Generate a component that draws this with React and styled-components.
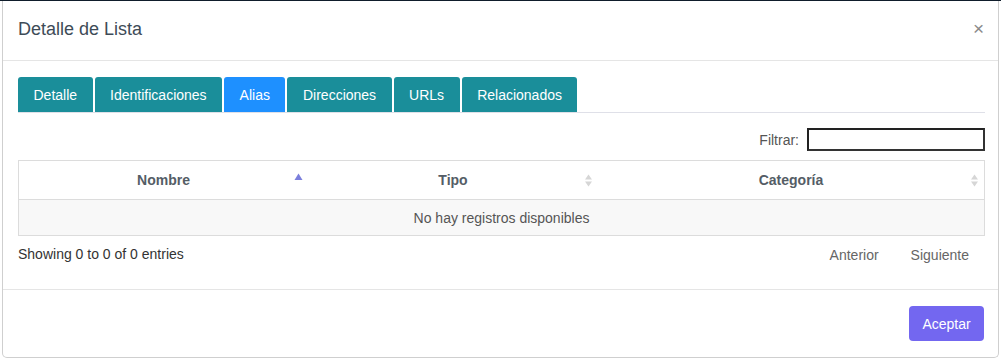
import React from 'react';
import styled, { createGlobalStyle } from 'styled-components';

const GlobalStyle = createGlobalStyle`
  html, body { margin: 0; padding: 0; background: #fff; }
  body {
    font-family: "Liberation Sans", Arial, sans-serif;
    font-size: 14px;
    color: #555;
  }
`;

const tabs = ['Detalle', 'Identificaciones', 'Alias', 'Direcciones', 'URLs', 'Relacionados'];
const columns = [
  { label: 'Nombre', sort: 'asc' },
  { label: 'Tipo', sort: 'both' },
  { label: 'Categoría', sort: 'both' },
];

function SortIcon({ mode }) {
  if (mode === 'asc') {
    return (
      <svg width="9" height="8" viewBox="0 0 9 8">
        <path d="M4.5 0.5 L8.5 7 L0.5 7 Z" fill="#7b7fdc" />
      </svg>
    );
  }
  return (
    <svg width="9" height="13" viewBox="0 0 9 13">
      <path d="M4.5 0.5 L8 5.5 L1 5.5 Z" fill="#d6d6d6" />
      <path d="M4.5 12.5 L8 7.5 L1 7.5 Z" fill="#d6d6d6" />
    </svg>
  );
}

export default function App() {
  return (
    <>
      <GlobalStyle />
      <Backdrop>
        <Modal>
          <ModalHeader>
            <ModalTitle>Detalle de Lista</ModalTitle>
            <CloseButton>×</CloseButton>
          </ModalHeader>
          <ModalBody>
            <TabList>
              {tabs.map((t) => (
                <Tab key={t} $active={t === 'Alias'}>{t}</Tab>
              ))}
            </TabList>
            <FilterRow>
              <FilterLabel>Filtrar:</FilterLabel>
              <FilterInput />
            </FilterRow>
            <Table>
              <thead>
                <tr>
                  {columns.map((c) => (
                    <HeadCell key={c.label}>
                      {c.label}
                      <SortSlot $mode={c.sort}>
                        <SortIcon mode={c.sort} />
                      </SortSlot>
                    </HeadCell>
                  ))}
                </tr>
              </thead>
              <tbody>
                <tr>
                  <EmptyCell colSpan={3}>No hay registros disponibles</EmptyCell>
                </tr>
              </tbody>
            </Table>
            <InfoRow>
              <Info>Showing 0 to 0 of 0 entries</Info>
              <Pager>
                <PageLink>Anterior</PageLink>
                <PageLink>Siguiente</PageLink>
              </Pager>
            </InfoRow>
          </ModalBody>
          <ModalFooter>
            <AcceptButton>Aceptar</AcceptButton>
          </ModalFooter>
        </Modal>
      </Backdrop>
    </>
  );
}

const Backdrop = styled.div`
  width: 1001px;
  height: 359px;
  border-top: 1px solid #0f1d2b;
  box-sizing: border-box;
  padding: 0 2px 0 2px;
  background: #fff;
`;

const Modal = styled.div`
  box-sizing: border-box;
  height: 357px;
  border: 1px solid #cfcfcf;
  border-top: none;
  border-radius: 0 0 5px 5px;
  background: #fff;
  display: flex;
  flex-direction: column;
`;

const ModalHeader = styled.div`
  height: 59px;
  display: flex;
  align-items: center;
  justify-content: space-between;
  padding: 0 15px;
  border-bottom: 1px solid #e5e5e5;
`;

const ModalTitle = styled.div`
  font-size: 18px;
  color: #3e4b57;
  margin-top: -2px;
`;

const CloseButton = styled.button`
  border: none;
  background: none;
  font-family: "Liberation Sans", Arial, sans-serif;
  font-size: 19px;
  color: #8a8a8a;
  padding: 0;
  margin-right: -1px;
  margin-top: -4px;
`;

const ModalBody = styled.div`
  padding: 16px 13px 0 15px;
  display: flex;
  flex-direction: column;
`;

const TabList = styled.div`
  display: flex;
  gap: 2px;
  border-bottom: 1px solid #dfe0e8;
  height: 35px;
`;

const Tab = styled.div`
  height: 35px;
  box-sizing: border-box;
  padding: 0 15.5px;
  display: flex;
  align-items: center;
  color: #fff;
  font-size: 14px;
  border-radius: 3px 3px 0 0;
  background: ${(p) => (p.$active ? '#1e90ff' : '#1a8e9a')};
`;

const FilterRow = styled.div`
  display: flex;
  justify-content: flex-end;
  align-items: center;
  gap: 8px;
  margin-top: 15px;
  height: 23px;
`;

const FilterLabel = styled.span`
  font-size: 14px;
  color: #555;
`;

const FilterInput = styled.input`
  box-sizing: border-box;
  width: 178px;
  height: 23px;
  border: 2px solid #333;
  border-top-color: #222;
  border-left-color: #222;
  padding: 0 4px;
  margin: 0;
`;

const Table = styled.table`
  margin-top: 9px;
  width: 967px;
  border-collapse: collapse;
  table-layout: fixed;
  border: 1px solid #dcdcdc;
  th:nth-child(1) { width: 289px; }
  th:nth-child(2) { width: 290px; }
`;

const HeadCell = styled.th`
  position: relative;
  height: 38px;
  padding: 0;
  font-size: 14px;
  font-weight: bold;
  color: #545d66;
  text-align: center;
  border-bottom: 1px solid #dcdcdc;
`;

const SortSlot = styled.span`
  position: absolute;
  right: 5px;
  top: ${(p) => (p.$mode === 'asc' ? '12px' : '13px')};
  line-height: 0;
`;

const EmptyCell = styled.td`
  height: 35px;
  padding: 0;
  background: #f8f8f8;
  text-align: center;
  font-size: 14px;
  color: #555;
`;

const InfoRow = styled.div`
  display: flex;
  justify-content: space-between;
  align-items: center;
  margin-top: 8px;
  height: 19px;
  padding-right: 2px;
`;

const Info = styled.div`
  font-size: 14px;
  color: #333;
`;

const Pager = styled.div`
  display: flex;
  gap: 32px;
  margin-right: 14px;
  padding-top: 2px;
`;

const PageLink = styled.span`
  font-size: 14px;
  color: #666;
`;

const ModalFooter = styled.div`
  margin-top: 26px;
  border-top: 1px solid #e5e5e5;
  display: flex;
  justify-content: flex-end;
  padding: 16px 14px 0 0;
`;

const AcceptButton = styled.button`
  box-sizing: border-box;
  width: 75px;
  height: 35px;
  border: none;
  border-radius: 4px;
  background: #7367f0;
  color: #fff;
  font-family: "Liberation Sans", Arial, sans-serif;
  font-size: 14px;
`;
